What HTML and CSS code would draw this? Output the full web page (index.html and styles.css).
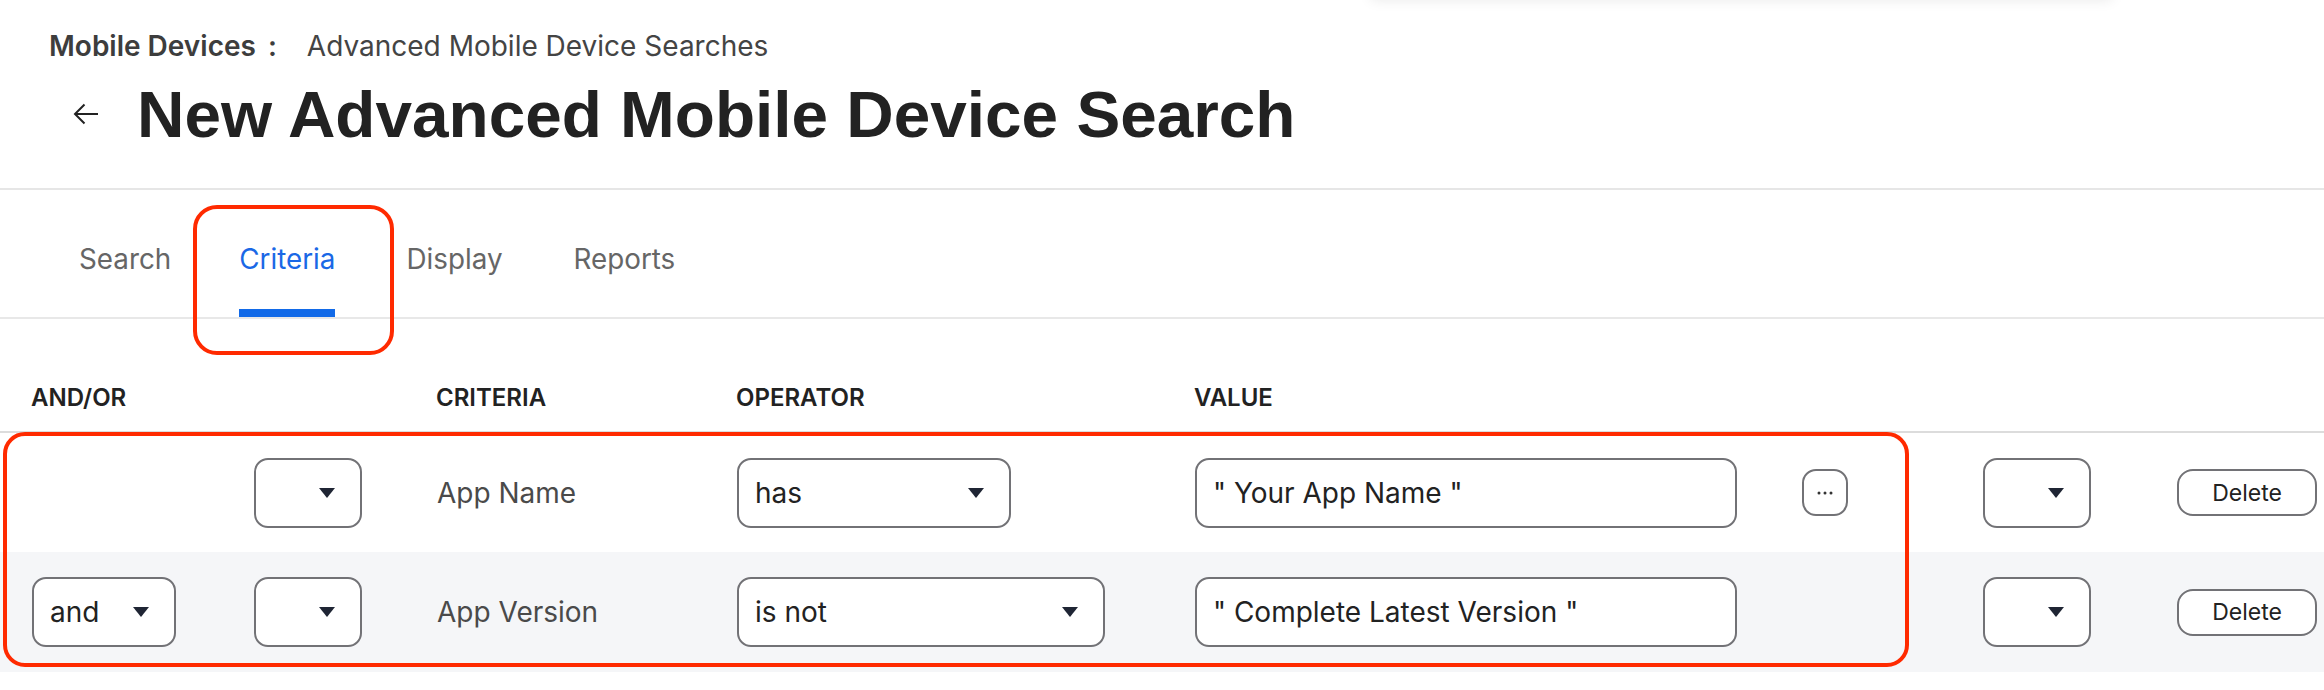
FILE: index.html
```html
<!DOCTYPE html>
<html lang="en">
<head>
<meta charset="utf-8">
<title>New Advanced Mobile Device Search</title>
<link rel="stylesheet" href="styles.css">
</head>
<body>
<div class="top-shadow"></div>
<header class="page-head">
  <nav class="crumbs">
    <span class="crumb-root">Mobile Devices</span><span class="crumb-sep">:</span><span class="crumb-leaf">Advanced Mobile Device Searches</span>
  </nav>
  <div class="title-row">
    <svg class="back" width="26" height="22" viewBox="0 0 26 22" aria-hidden="true"><path d="M25 11H2M11.5 1.5L2 11l9.5 9.5" fill="none" stroke="#222" stroke-width="2"/></svg>
    <h1 class="title">New Advanced Mobile Device Search</h1>
  </div>
</header>

<div class="tabs">
  <span class="tab first">Search</span>
  <span class="tab active">Criteria<span class="mark-tab"></span></span>
  <span class="tab">Display</span>
  <span class="tab">Reports</span>
</div>

<section class="criteria">
  <div class="grid head">
    <div class="th">AND/OR</div>
    <div class="th"></div>
    <div class="th">CRITERIA</div>
    <div class="th">OPERATOR</div>
    <div class="th">VALUE</div>
  </div>
  <div class="rows">
    <div class="grid row">
      <div class="cell"></div>
      <div class="cell"><div class="select w-paren"><span></span><i class="caret"></i></div></div>
      <div class="cell name">App Name</div>
      <div class="cell"><div class="select w-has"><span>has</span><i class="caret"></i></div></div>
      <div class="cell"><div class="input">" Your App Name "</div></div>
      <div class="cell"><button class="btn more"><svg width="16" height="4" viewBox="0 0 16 4"><circle cx="2" cy="2" r="1.5" fill="#333"/><circle cx="8" cy="2" r="1.5" fill="#333"/><circle cx="14" cy="2" r="1.5" fill="#333"/></svg></button></div>
      <div class="cell"><div class="select w-side"><span></span><i class="caret"></i></div></div>
      <div class="cell"><button class="btn del">Delete</button></div>
    </div>
    <div class="grid row alt">
      <div class="cell"><div class="select w-and"><span>and</span><i class="caret"></i></div></div>
      <div class="cell"><div class="select w-paren"><span></span><i class="caret"></i></div></div>
      <div class="cell name">App Version</div>
      <div class="cell"><div class="select w-isnot"><span>is not</span><i class="caret"></i></div></div>
      <div class="cell"><div class="input">" Complete Latest Version "</div></div>
      <div class="cell"></div>
      <div class="cell"><div class="select w-side"><span></span><i class="caret"></i></div></div>
      <div class="cell"><button class="btn del">Delete</button></div>
    </div>
    <div class="mark-rows"></div>
  </div>
</section>
</body>
</html>
```

FILE: styles.css
```css
* { box-sizing: border-box; }
html, body { margin: 0; padding: 0; background: #fff; }
body {
  font-family: Inter, "Liberation Sans", Arial, sans-serif;
  color: #222;
  width: 2324px;
  height: 690px;
  overflow: hidden;
  position: relative;
}

.top-shadow {
  position: absolute;
  left: 1371px;
  top: -40px;
  width: 741px;
  height: 40px;
  background: #fff;
  box-shadow: 0 0 14px rgba(0, 0, 0, 0.09);
}

.page-head {
  padding: 30px 0 35px 0;
  border-bottom: 2px solid #e6e6e6;
}
.crumbs {
  display: flex;
  align-items: baseline;
  padding-left: 49px;
  font-size: 28px;
  line-height: 32px;
  color: #444;
}
.crumb-root { font-weight: 600; color: #3d3d3d; }
.crumb-sep { font-weight: 600; margin: 0 30px 0 12px; color: #3d3d3d; }
.crumb-leaf { color: #444; }

.title-row {
  display: flex;
  align-items: center;
  margin-top: 15px;
  padding-left: 73px;
  gap: 38px;
}
.back { display: block; flex: none; margin-top: -2px; }
.title {
  margin: 0;
  font-family: "Liberation Sans", Arial, Helvetica, sans-serif;
  font-size: 65.7px;
  line-height: 76px;
  font-weight: 700;
  color: #222;
}

.tabs {
  display: flex;
  gap: 71px;
  padding-left: 79px;
  height: 129px;
  border-bottom: 2px solid #e8e8e8;
}
.tab {
  position: relative;
  padding-top: 52px;
  font-size: 27.8px;
  line-height: 34px;
  color: #666;
}
.tab.first { margin-right: -3px; }
.tab.active { color: #1a68e6; }
.tab.active::after {
  content: "";
  position: absolute;
  left: 0;
  right: 0;
  bottom: 0;
  height: 8px;
  background: #126ae8;
}
.mark-tab {
  position: absolute;
  left: -46px;
  top: 15px;
  width: 201px;
  height: 150px;
  border: 4px solid #ff2a00;
  border-radius: 24px;
  z-index: 2;
}

.grid {
  display: grid;
  grid-template-columns: 222px 183px 300px 458px 607px 181px 194px 1fr;
  padding-left: 32px;
  align-items: center;
}
.head {
  padding-top: 65px;
  padding-bottom: 19px;
  border-bottom: 2px solid #dcdcdc;
  padding-left: 31px;
}
.th {
  font-size: 24px;
  line-height: 28px;
  font-weight: 600;
  color: #222;
}

.rows { position: relative; }
.row { height: 119px; }
.row.alt { height: 120px; background: #f5f6f8; }
.name { font-size: 28px; color: #4a4a4a; }

.select, .input {
  height: 70px;
  border: 2px solid #727276;
  border-radius: 14px;
  background: #fff;
  display: flex;
  align-items: center;
  font-size: 28px;
  color: #222;
}
.select {
  justify-content: space-between;
  padding: 0 25px 0 16px;
}
.caret {
  display: block;
  width: 0;
  height: 0;
  border-left: 8px solid transparent;
  border-right: 8px solid transparent;
  border-top: 10px solid #1f2534;
}
.w-paren { width: 108px; }
.w-side { width: 108px; }
.w-and { width: 144px; }
.w-has { width: 274px; }
.w-isnot { width: 368px; }
.input { width: 542px; padding-left: 16px; }

.btn {
  height: 47px;
  border: 2px solid #727276;
  background: #fff;
  font-family: Inter, "Liberation Sans", Arial, sans-serif;
  color: #222;
  padding: 0;
  display: flex;
  align-items: center;
  justify-content: center;
}
.more { width: 46px; border-radius: 14px; }
.del { width: 140px; border-radius: 16px; font-size: 23px; }

.mark-rows {
  position: absolute;
  left: 3px;
  top: -1px;
  width: 1906px;
  height: 235px;
  border: 4px solid #ff2a00;
  border-radius: 22px;
  pointer-events: none;
}
```
